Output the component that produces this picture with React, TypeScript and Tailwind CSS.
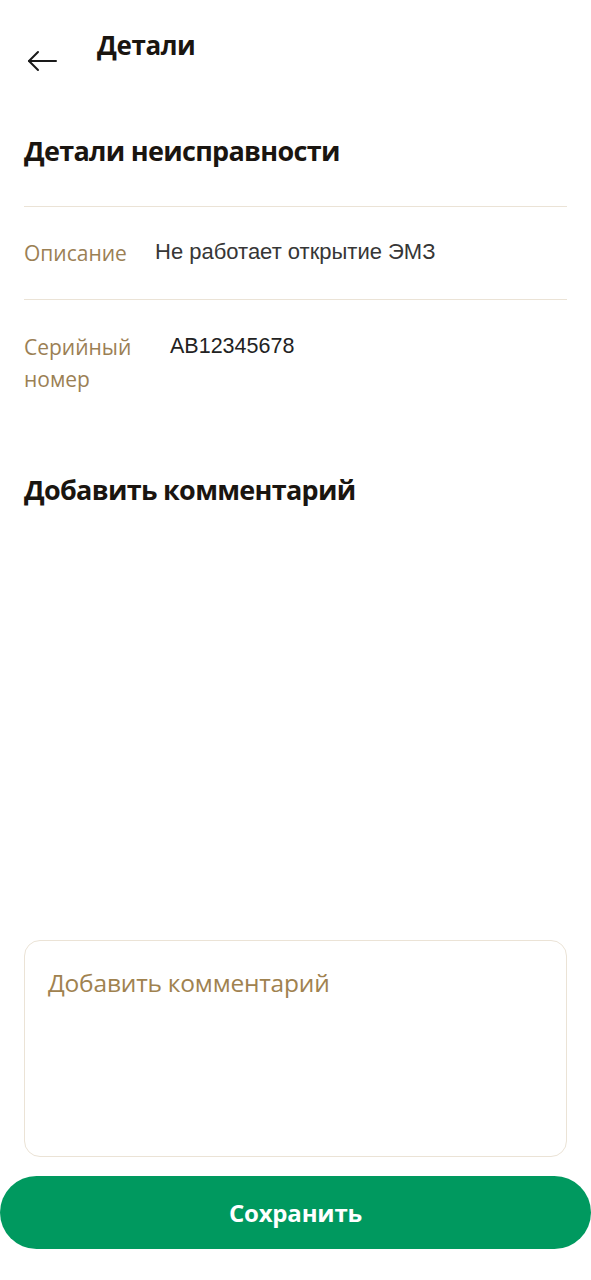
import React from "react";

export default function App() {
  const heading = { fontFamily: '"Open Sans", "Noto Sans", sans-serif' };
  const body = { fontFamily: '"Liberation Sans", Arial, sans-serif' };
  return (
    <div className="w-[591px] h-[1280px] bg-white flex flex-col" style={heading}>
      <div className="flex items-start pt-[30px] pl-[26px]">
        <div className="mt-[20px] w-[34px] h-[22px] flex items-center">
          <svg width="32" height="22" viewBox="0 0 32 22" fill="none" stroke="#1a1a1a" strokeWidth="2" strokeLinecap="round" strokeLinejoin="round">
            <path d="M30 11H3" />
            <path d="M12 2L3 11L12 20" />
          </svg>
        </div>
        <div className="ml-[37px] text-[26px] leading-[30px] font-bold text-[#1a1510] tracking-[-0.4px]">Детали</div>
      </div>

      <div className="px-[24px] mt-[61px]">
        <div className="text-[27px] leading-[36px] font-bold text-[#1a1510] tracking-[-0.7px]">Детали неисправности</div>
        <div className="mt-[37px] h-px bg-[#ebe3d6]" />
        <div className="flex items-start pt-[30px] pb-[30px]">
          <div className="w-[131px] text-[21px] leading-[32px] text-[#9b8054]">Описание</div>
          <div className="text-[22px] leading-[30px] text-[#363636]" style={body}>Не работает открытие ЭМЗ</div>
        </div>
        <div className="h-px bg-[#ebe3d6]" />
        <div className="flex items-start pt-[31px]">
          <div className="w-[146px] text-[21px] leading-[32px] text-[#9b8054]">Серийный<br />номер</div>
          <div className="text-[21.5px] leading-[30px] text-[#222222]" style={body}>AB12345678</div>
        </div>
        <div className="mt-[77px] text-[27px] leading-[36px] font-bold text-[#1a1510] tracking-[-0.7px]">Добавить комментарий</div>
      </div>

      <div className="flex-1" />

      <div className="px-[24px]">
        <div className="h-[217px] rounded-[16px] border-[1.5px] border-[#ebe3d6] px-[23px] pt-[26px]">
          <div className="text-[24.5px] leading-[32px] text-[#a0824f] tracking-[-0.2px]">Добавить комментарий</div>
        </div>
      </div>
      <div className="mt-[19px] mb-[31px]">
        <button className="w-full h-[73px] rounded-full bg-[#00995f] text-white text-[24px] font-bold tracking-[-0.2px]">Сохранить</button>
      </div>
    </div>
  );
}
